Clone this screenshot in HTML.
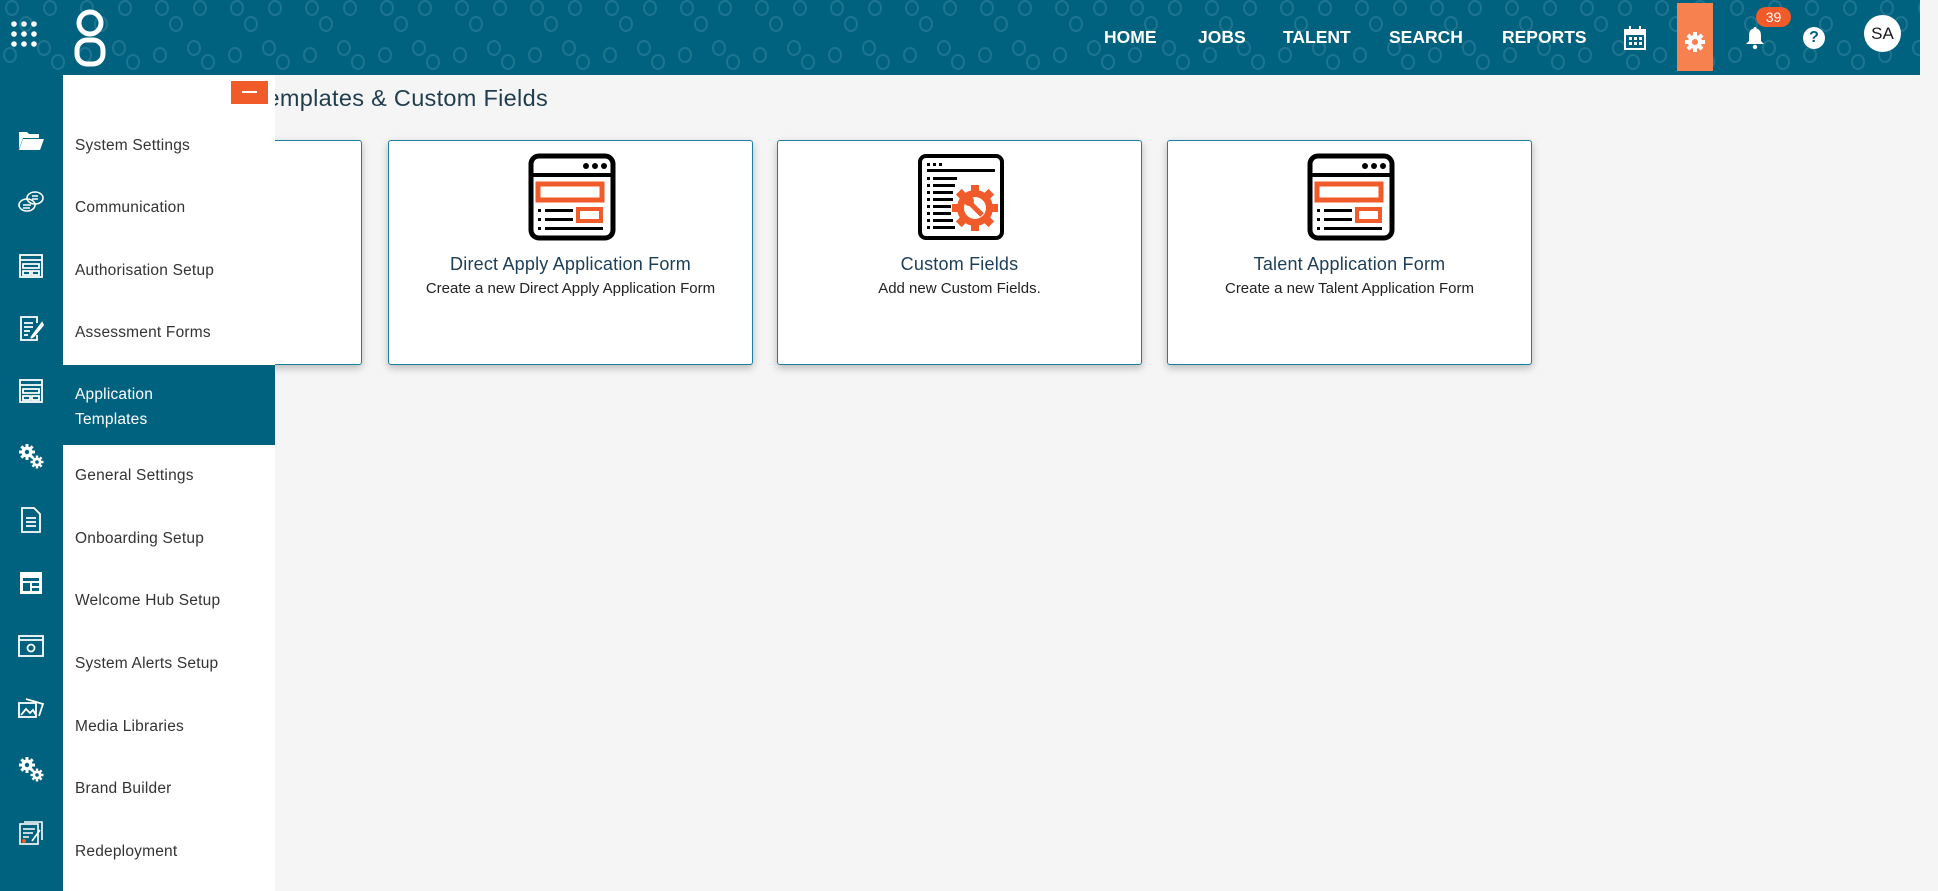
<!DOCTYPE html>
<html><head><meta charset="utf-8"><style>
*{margin:0;padding:0;box-sizing:border-box}
body{width:1938px;height:891px;overflow:hidden;background:#f5f5f5;font-family:"Liberation Sans",sans-serif;position:relative}
.hdr{position:absolute;left:0;top:0;width:1920px;height:75px;background:#00627e;overflow:hidden;z-index:5}
.rail{position:absolute;left:0;top:75px;width:63px;height:816px;background:#00627e;z-index:5}
.panel{position:absolute;left:63px;top:75px;width:212px;height:816px;background:#fff;z-index:3}
.item{position:absolute;left:12px;font-size:15.5px;color:#333;white-space:nowrap;letter-spacing:.2px}
.active{position:absolute;left:0;top:290px;width:212px;height:80px;background:#00627e}
.minus{position:absolute;left:231px;top:81px;width:37px;height:23px;background:#f15a29;z-index:4}
.minus:after{content:"";position:absolute;left:11px;top:10px;width:15px;height:2px;background:#fff}
.title{position:absolute;left:0;top:85px;width:548px;text-align:right;font-size:23.5px;color:#1f3d4d;white-space:nowrap;letter-spacing:.3px}
.card{position:absolute;top:140px;width:365px;height:225px;background:#fff;border:1px solid #1c7fa0;border-radius:3px;box-shadow:0 3px 8px rgba(0,0,0,.25);text-align:center}
.card svg{position:absolute;left:139px;top:12px}
.ct{position:absolute;left:0;right:0;top:113px;font-size:18px;color:#1c3e57;letter-spacing:.2px}
.cs{position:absolute;left:0;right:0;top:139px;font-size:15px;color:#222}
.nav{position:absolute;top:27px;color:#fff;font-weight:bold;font-size:17.5px}
.ri{position:absolute;left:18px;width:26px;height:26px}
</style></head><body>
<div class="hdr">
<svg width="1920" height="75" style="position:absolute;left:0;top:0"><defs><pattern id="p" width="75" height="75" patternUnits="userSpaceOnUse"><g fill="none" stroke="#1d7590" stroke-width="2"><ellipse cx="12" cy="8" rx="6" ry="7"/><ellipse cx="26" cy="24" rx="6" ry="7"/><ellipse cx="50" cy="8" rx="6" ry="7"/><ellipse cx="44" cy="48" rx="6" ry="7"/><ellipse cx="58" cy="62" rx="6" ry="7"/><ellipse cx="10" cy="55" rx="6" ry="7"/></g></pattern></defs><rect width="1920" height="75" fill="url(#p)"/></svg>
<svg style="position:absolute;left:11px;top:21px" width="26" height="26"><g fill="#fff"><circle cx="3" cy="3" r="2.8"/><circle cx="13" cy="3" r="2.8"/><circle cx="23" cy="3" r="2.8"/><circle cx="3" cy="13" r="2.8"/><circle cx="13" cy="13" r="2.8"/><circle cx="23" cy="13" r="2.8"/><circle cx="3" cy="23" r="2.8"/><circle cx="13" cy="23" r="2.8"/><circle cx="23" cy="23" r="2.8"/></g></svg>
<svg style="position:absolute;left:74px;top:9px" width="32" height="58"><g fill="none" stroke="#fff" stroke-width="5"><ellipse cx="16" cy="14" rx="11" ry="11"/><rect x="3" y="31" width="26" height="24" rx="10"/></g></svg>
<div class="nav" style="left:1104px">HOME</div>
<div class="nav" style="left:1198px">JOBS</div>
<div class="nav" style="left:1283px">TALENT</div>
<div class="nav" style="left:1389px">SEARCH</div>
<div class="nav" style="left:1502px">REPORTS</div>
<svg style="position:absolute;left:1624px;top:26px" width="22" height="24"><rect x="1" y="4" width="20" height="19" fill="none" stroke="#fff" stroke-width="2"/><rect x="1" y="4" width="20" height="5" fill="#fff"/><rect x="5" y="0" width="2" height="5" fill="#fff"/><rect x="15" y="0" width="2" height="5" fill="#fff"/><g fill="#fff"><rect x="5" y="11" width="3" height="3"/><rect x="10" y="11" width="3" height="3"/><rect x="15" y="11" width="3" height="3"/><rect x="5" y="16" width="3" height="3"/><rect x="10" y="16" width="3" height="3"/><rect x="15" y="16" width="3" height="3"/></g></svg>
<div style="position:absolute;left:1677px;top:3px;width:36px;height:68px;background:#f7814f"></div>
<svg style="position:absolute;left:1685px;top:32px" width="20" height="20" viewBox="0 0 20 20"><g fill="#fff"><circle cx="10" cy="10" r="7"/><rect x="8" y="0" width="4" height="20"/><rect x="0" y="8" width="20" height="4"/><rect x="8" y="0" width="4" height="20" transform="rotate(45 10 10)"/><rect x="8" y="0" width="4" height="20" transform="rotate(-45 10 10)"/></g><circle cx="10" cy="10" r="3" fill="#f7814f"/></svg>
<svg style="position:absolute;left:1745px;top:26px" width="20" height="24"><path fill="#fff" d="M10 1c1 0 1.5.7 1.5 1.5C15 3.5 16 6 16 10v5l3 3H1l3-3v-5c0-4 1-6.5 4.5-7.5C8.5 1.7 9 1 10 1z"/><circle cx="10" cy="21" r="2.2" fill="#fff"/></svg>
<div style="position:absolute;left:1756px;top:7px;width:35px;height:20px;background:#f15a29;border-radius:10px;color:#fff;font-size:14px;text-align:center;line-height:20px">39</div>
<div style="position:absolute;left:1803px;top:27px;width:22px;height:22px;border-radius:50%;background:#fff;color:#00627e;font-weight:bold;font-size:16px;text-align:center;line-height:22px">?</div>
<div style="position:absolute;left:1864px;top:15px;width:37px;height:37px;border-radius:50%;background:#fff;color:#1a1a1a;font-size:17px;text-align:center;line-height:37px">SA</div>
</div>
<svg width="0" height="0" style="position:absolute"><defs>
<g id="gears"><g fill="#fff"><circle cx="9" cy="9" r="5.5"/><rect x="7.5" y="1" width="3" height="16"/><rect x="1" y="7.5" width="16" height="3"/><rect x="7.5" y="1" width="3" height="16" transform="rotate(45 9 9)"/><rect x="7.5" y="1" width="3" height="16" transform="rotate(-45 9 9)"/><circle cx="19" cy="19" r="4.5"/><rect x="17.8" y="12.5" width="2.4" height="13"/><rect x="12.5" y="17.8" width="13" height="2.4"/><rect x="17.8" y="12.5" width="2.4" height="13" transform="rotate(45 19 19)"/><rect x="17.8" y="12.5" width="2.4" height="13" transform="rotate(-45 19 19)"/></g><g fill="#00627e"><circle cx="9" cy="9" r="2.2"/><circle cx="19" cy="19" r="1.8"/></g></g>
</defs></svg>
<div class="rail">
<svg class="ri" style="top:52px" viewBox="0 0 26 26"><path fill="#fff" d="M1 5h8l2 2h10v4H5L1 22z M5 12h21l-4 11H1z"/></svg>
<svg class="ri" style="top:115px" viewBox="0 0 26 26"><g fill="none" stroke="#fff" stroke-width="1.6"><ellipse cx="17" cy="8" rx="8" ry="6"/><ellipse cx="9" cy="15" rx="8" ry="6"/><path d="M5 15h8M5 18h7M14 6h6M14 9h6"/></g></svg>
<svg class="ri" style="top:178px" viewBox="0 0 26 26"><g fill="none" stroke="#fff" stroke-width="1.8"><rect x="2" y="2" width="22" height="22"/><path d="M2 7h22M5 11h16v4H5zM5 18h7v4H5zM14 18h7v4h-7z"/></g></svg>
<svg class="ri" style="top:240px" viewBox="0 0 26 26"><g fill="none" stroke="#fff" stroke-width="1.8"><path d="M19 8V2H3v23h16v-5"/><path d="M6 8h9M6 12h9M6 16h6M6 20h4M24 8l-9 12-2 3 3-2 9-11z"/></g></svg>
<svg class="ri" style="top:303px" viewBox="0 0 26 26"><g fill="none" stroke="#fff" stroke-width="1.8"><rect x="2" y="2" width="22" height="22"/><path d="M2 7h22M5 11h16v4H5zM5 18h7v4H5zM14 18h7v4h-7z"/></g></svg>
<svg class="ri" style="top:368px" viewBox="0 0 26 26"><use href="#gears"/></svg>
<svg class="ri" style="top:432px" viewBox="0 0 26 26"><g fill="none" stroke="#fff" stroke-width="1.8"><path d="M4 1h12l6 6v18H4z"/><path d="M8 11h10M8 15h10M8 19h10"/></g></svg>
<svg class="ri" style="top:495px" viewBox="0 0 26 26"><rect x="2" y="2" width="22" height="22" fill="#fff"/><g fill="#00627e"><rect x="5" y="8" width="16" height="3"/><rect x="5" y="13" width="7" height="8"/><rect x="14" y="13" width="7" height="3"/><rect x="14" y="18" width="7" height="3"/></g></svg>
<svg class="ri" style="top:558px" viewBox="0 0 26 26"><g fill="none" stroke="#fff" stroke-width="1.8"><rect x="1" y="3" width="24" height="20"/><path d="M1 7h24"/><circle cx="13" cy="15" r="3.5"/></g></svg>
<svg class="ri" style="top:620px" viewBox="0 0 26 26"><g fill="none" stroke="#fff" stroke-width="1.8"><rect x="1" y="8" width="17" height="14"/><path d="M8 4l17 5-4 12"/><path d="M3 20l5-6 4 4 3-3 3 5" /></g></svg>
<svg class="ri" style="top:681px" viewBox="0 0 26 26"><use href="#gears"/></svg>
<svg class="ri" style="top:745px" viewBox="0 0 26 26"><g fill="none" stroke="#fff" stroke-width="1.6"><rect x="2" y="4" width="18" height="20"/><path d="M6 2h18v18M5 9h12M5 13h10M5 17h6M22 10l-8 11"/></g><circle cx="6" cy="21" r="2" fill="#f15a29"/></svg>
</div>
<div class="title">Application Templates &amp; Custom Fields</div>
<div class="card" style="left:-3px"><div class="ct">Application Templates</div><div class="cs" style="left:-40px">Create a new Application form</div></div>
<div class="card" style="left:388px">
<svg width="88" height="88" viewBox="0 0 88 88"><rect x="3" y="3" width="82" height="82" rx="8" fill="none" stroke="#000" stroke-width="5"/><path d="M3 22h82" stroke="#000" stroke-width="4"/><g fill="#000"><circle cx="58" cy="13" r="3"/><circle cx="67" cy="13" r="3"/><circle cx="76" cy="13" r="3"/></g><rect x="10" y="31" width="64" height="16" fill="none" stroke="#f15a29" stroke-width="5"/><rect x="50" y="56" width="23" height="12" fill="none" stroke="#f15a29" stroke-width="4"/><g fill="#000"><rect x="10" y="56" width="3" height="3"/><rect x="17" y="56" width="28" height="3"/><rect x="10" y="65" width="3" height="3"/><rect x="17" y="65" width="28" height="3"/><rect x="10" y="74" width="3" height="3"/><rect x="17" y="74" width="58" height="3"/></g></svg>
<div class="ct">Direct Apply Application Form</div><div class="cs">Create a new Direct Apply Application Form</div></div>
<div class="card" style="left:777px">
<svg width="88" height="88" viewBox="0 0 88 88"><rect x="3" y="3" width="82" height="82" rx="6" fill="none" stroke="#000" stroke-width="4"/><g fill="#000"><rect x="10" y="10" width="3" height="3"/><rect x="16" y="10" width="3" height="3"/><rect x="22" y="10" width="3" height="3"/><rect x="10" y="16" width="68" height="3"/></g><g fill="#000"><rect x="10" y="24" width="3" height="3"/><rect x="16" y="24" width="24" height="3"/><rect x="10" y="31" width="3" height="3"/><rect x="16" y="31" width="22" height="3"/><rect x="10" y="38" width="3" height="3"/><rect x="16" y="38" width="20" height="3"/><rect x="10" y="45" width="3" height="3"/><rect x="16" y="45" width="20" height="3"/><rect x="10" y="52" width="3" height="3"/><rect x="16" y="52" width="18" height="3"/><rect x="10" y="59" width="3" height="3"/><rect x="16" y="59" width="18" height="3"/><rect x="10" y="66" width="3" height="3"/><rect x="16" y="66" width="20" height="3"/><rect x="10" y="73" width="3" height="3"/><rect x="16" y="73" width="22" height="3"/></g><g fill="#f15a29"><circle cx="58" cy="55" r="18"/><rect x="54" y="32" width="8" height="46"/><rect x="35" y="51" width="46" height="8"/><rect x="54" y="32" width="8" height="46" transform="rotate(45 58 55)"/><rect x="54" y="32" width="8" height="46" transform="rotate(-45 58 55)"/></g><circle cx="58" cy="55" r="11" fill="#fff"/><path d="M51 48l14 14" stroke="#f15a29" stroke-width="5"/><circle cx="52" cy="48" r="5" fill="#f15a29"/></svg>
<div class="ct">Custom Fields</div><div class="cs">Add new Custom Fields.</div></div>
<div class="card" style="left:1167px">
<svg width="88" height="88" viewBox="0 0 88 88"><rect x="3" y="3" width="82" height="82" rx="8" fill="none" stroke="#000" stroke-width="5"/><path d="M3 22h82" stroke="#000" stroke-width="4"/><g fill="#000"><circle cx="58" cy="13" r="3"/><circle cx="67" cy="13" r="3"/><circle cx="76" cy="13" r="3"/></g><rect x="10" y="31" width="64" height="16" fill="none" stroke="#f15a29" stroke-width="5"/><rect x="50" y="56" width="23" height="12" fill="none" stroke="#f15a29" stroke-width="4"/><g fill="#000"><rect x="10" y="56" width="3" height="3"/><rect x="17" y="56" width="28" height="3"/><rect x="10" y="65" width="3" height="3"/><rect x="17" y="65" width="28" height="3"/><rect x="10" y="74" width="3" height="3"/><rect x="17" y="74" width="58" height="3"/></g></svg>
<div class="ct">Talent Application Form</div><div class="cs">Create a new Talent Application Form</div></div>
<div class="panel">
<div class="active"></div>
<div class="item" style="top:62px">System Settings</div>
<div class="item" style="top:124px">Communication</div>
<div class="item" style="top:187px">Authorisation Setup</div>
<div class="item" style="top:249px">Assessment Forms</div>
<div class="item" style="top:311px;color:#fff">Application</div>
<div class="item" style="top:336px;color:#fff">Templates</div>
<div class="item" style="top:392px">General Settings</div>
<div class="item" style="top:455px">Onboarding Setup</div>
<div class="item" style="top:517px">Welcome Hub Setup</div>
<div class="item" style="top:580px">System Alerts Setup</div>
<div class="item" style="top:643px">Media Libraries</div>
<div class="item" style="top:705px">Brand Builder</div>
<div class="item" style="top:768px">Redeployment</div>
</div>
<div class="minus"></div>
</body></html>
